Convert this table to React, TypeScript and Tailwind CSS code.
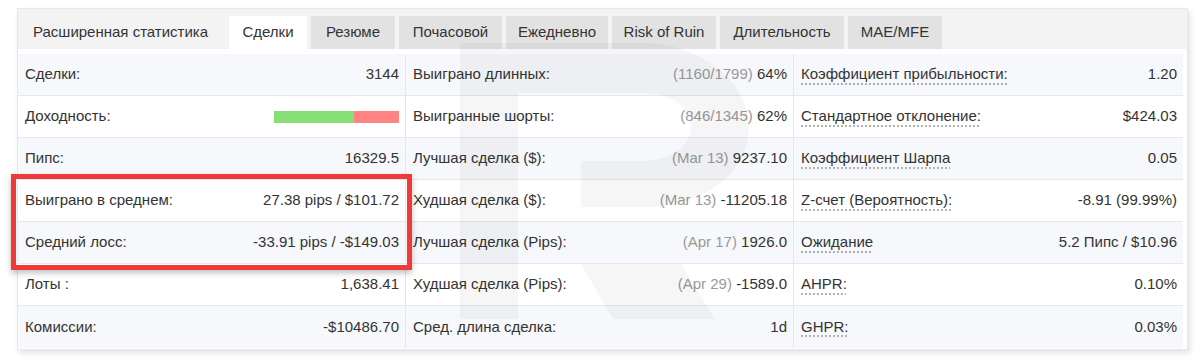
import React from "react";

type Cell = { label: string; value: React.ReactNode; dotted?: boolean; muted?: string };

const col1: Cell[] = [
  { label: "Сделки:", value: "3144" },
  { label: "Доходность:", value: "__bar__" },
  { label: "Пипс:", value: "16329.5" },
  { label: "Выиграно в среднем:", value: "27.38 pips / $101.72" },
  { label: "Средний лосс:", value: "-33.91 pips / -$149.03" },
  { label: "Лоты :", value: "1,638.41" },
  { label: "Комиссии:", value: "-$10486.70" },
];

const col2: Cell[] = [
  { label: "Выиграно длинных:", muted: "(1160/1799)", value: "64%" },
  { label: "Выигранные шорты:", muted: "(846/1345)", value: "62%" },
  { label: "Лучшая сделка ($):", muted: "(Mar 13)", value: "9237.10" },
  { label: "Худшая сделка ($):", muted: "(Mar 13)", value: "-11205.18" },
  { label: "Лучшая сделка (Pips):", muted: "(Apr 17)", value: "1926.0" },
  { label: "Худшая сделка (Pips):", muted: "(Apr 29)", value: "-1589.0" },
  { label: "Сред. длина сделка:", value: "1d" },
];

const col3: Cell[] = [
  { label: "Коэффициент прибыльности:", value: "1.20", dotted: true },
  { label: "Стандартное отклонение:", value: "$424.03", dotted: true },
  { label: "Коэффициент Шарпа", value: "0.05", dotted: true },
  { label: "Z-счет (Вероятность):", value: "-8.91 (99.99%)", dotted: true },
  { label: "Ожидание", value: "5.2 Пипс / $10.96", dotted: true },
  { label: "AHPR:", value: "0.10%", dotted: true },
  { label: "GHPR:", value: "0.03%", dotted: true },
];

function Column({ cells, last }: { cells: Cell[]; last?: boolean }) {
  return (
    <div className={"flex flex-col " + (last ? "" : "border-r border-[#e4e8ee]")}>
      {cells.map((c, i) => (
        <div
          key={i}
          className={
            "flex h-[42px] items-center justify-between pl-[7px] pr-[6px] border-b border-[#e4e8ee] last:border-b-0 " +
            (i % 2 === 0 ? "bg-[#f6f8fb]" : "bg-white")
          }
        >
          <span
            className={
              c.dotted
                ? "underline decoration-dotted decoration-[#999] underline-offset-[4px]"
                : ""
            }
          >
            {c.label}
          </span>
          {c.value === "__bar__" ? (
            <div className="flex h-[12px] w-[125px]">
              <div className="h-full w-[80px] bg-[#88df78]" />
              <div className="h-full flex-1 bg-[#ff8383]" />
            </div>
          ) : (
            <span>
              {c.muted && <span className="text-[#9a9a9a]">{c.muted} </span>}
              {c.value}
            </span>
          )}
        </div>
      ))}
    </div>
  );
}

export default function App() {
  return (
    <div
      className="relative h-[360px] w-[1200px] bg-white pl-[17px] pr-[12px] pt-[8px] text-[15px] text-[#333]"
      style={{ fontFamily: "'Liberation Sans', Arial, sans-serif" }}
    >
      <div className="relative overflow-hidden border border-[#e8e8e8] bg-white pb-[1px] shadow-[2px_3px_6px_rgba(0,0,0,0.12)]">
        {/* tab bar */}
        <div className="flex h-[40px] items-end bg-[#f3f3f3]">
          <div className="flex h-[33px] w-[211px] items-center pl-[15px]">Расширенная статистика</div>
          <div className="flex h-[33px] w-[78px] items-center justify-center bg-white">Сделки</div>
          <div className="ml-[4px] flex h-[33px] w-[84px] items-center justify-center bg-[#e2e2e2]">Резюме</div>
          <div className="ml-[4px] flex h-[33px] w-[103px] items-center justify-center bg-[#e2e2e2]">Почасовой</div>
          <div className="ml-[4px] flex h-[33px] w-[102px] items-center justify-center bg-[#e2e2e2]">Ежедневно</div>
          <div className="ml-[4px] flex h-[33px] w-[104px] items-center justify-center bg-[#e2e2e2]">Risk of Ruin</div>
          <div className="ml-[4px] flex h-[33px] w-[124px] items-center justify-center bg-[#e2e2e2]">Длительность</div>
          <div className="ml-[4px] flex h-[33px] w-[94px] items-center justify-center bg-[#e2e2e2]">MAE/MFE</div>
        </div>
        <div className="mt-[5px] grid grid-cols-[388px_388px_389px] pr-[2px]">
          <Column cells={col1} />
          <Column cells={col2} />
          <Column cells={col3} last />
        </div>
        {/* watermark */}
        <svg
          className="pointer-events-none absolute left-0 top-0"
          width="1171"
          height="345"
          viewBox="17 8 1171 345"
        >
          <g fill="rgba(0,0,0,0.035)" fillRule="evenodd">
            <rect x="459" y="42" width="58" height="276" />
            <path d="M517 42 H640 C705 42 748 85 748 125 C748 170 705 206 645 206 H580 V160 H640 C670 160 690 145 690 125 C690 105 670 92 640 92 H517 Z" />
            <path d="M580 263 H680 L714 318 H612 Z" />
          </g>
        </svg>
      </div>
      {/* red highlight */}
      <div className="pointer-events-none absolute left-[11px] top-[174px] h-[96px] w-[401px] border-[5px] border-[#f03a3a] shadow-[0_3px_6px_rgba(0,0,0,0.25)]" />
    </div>
  );
}
